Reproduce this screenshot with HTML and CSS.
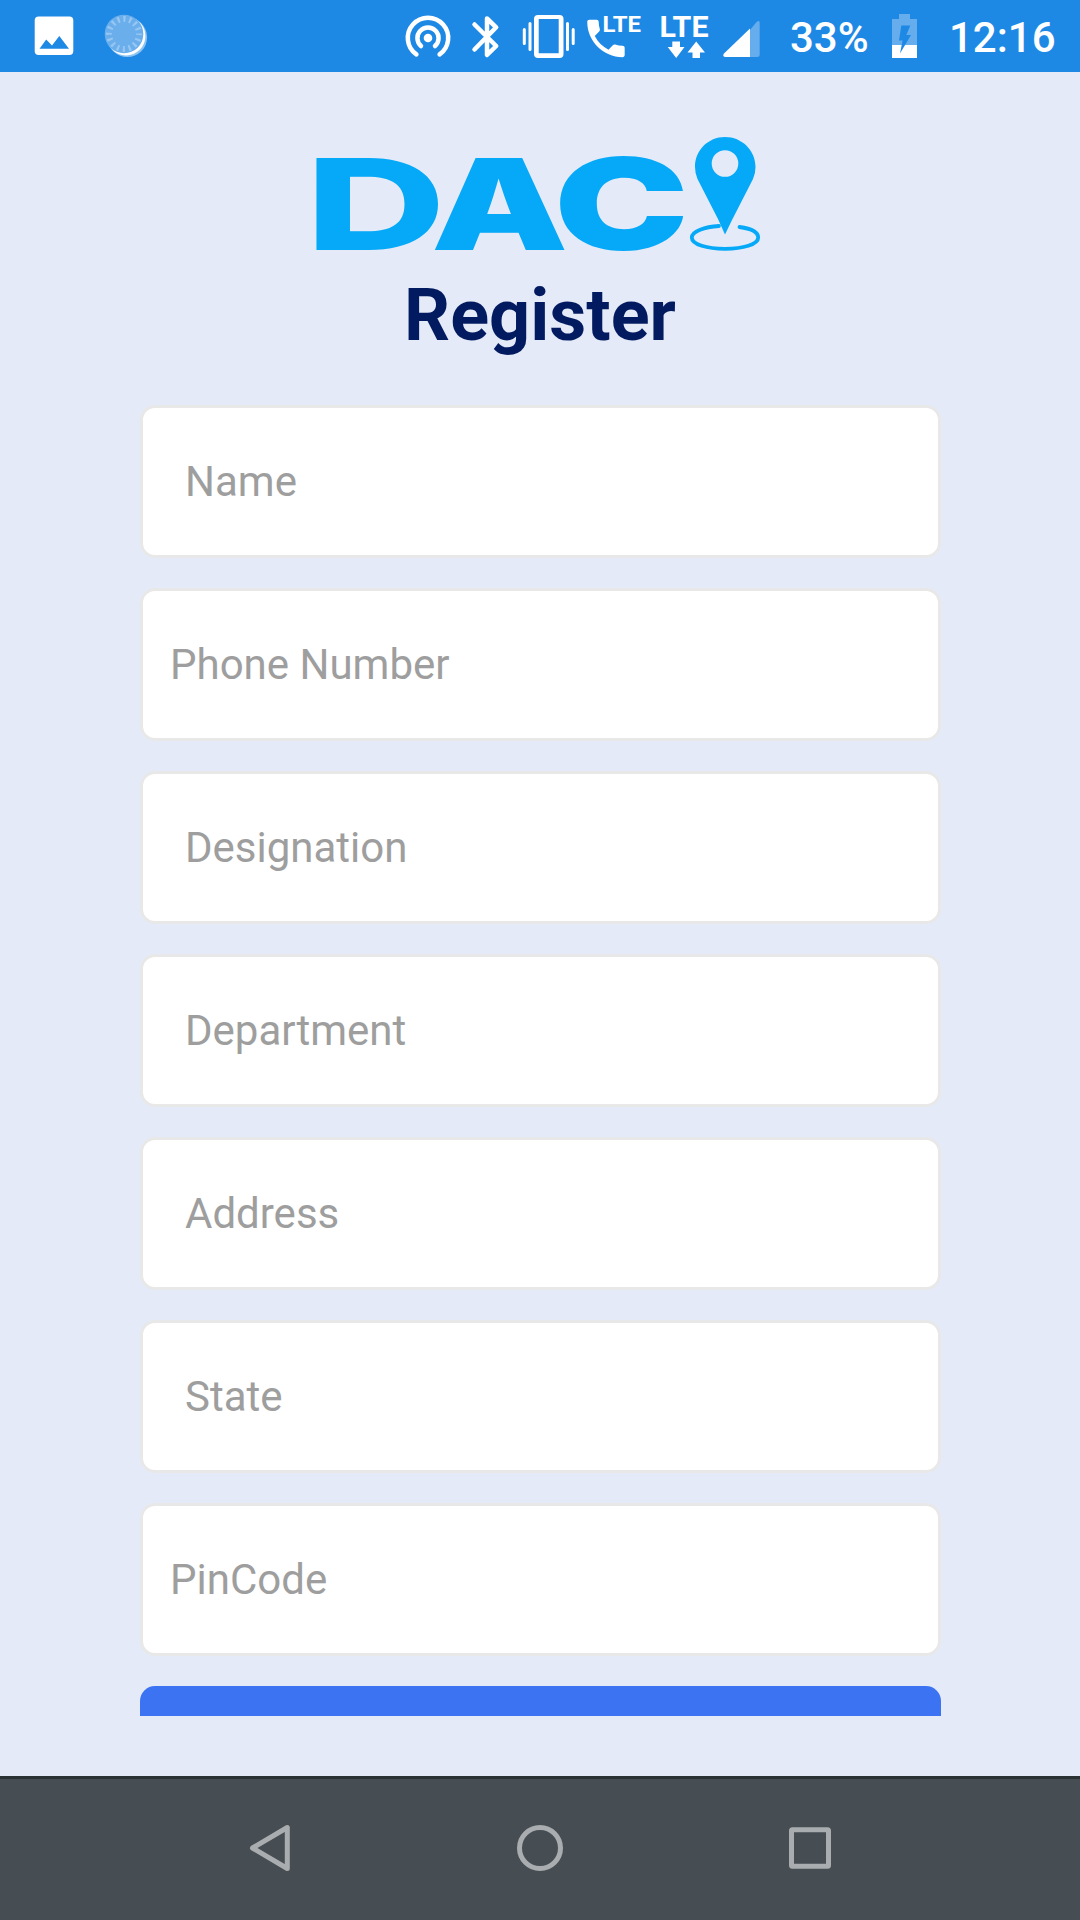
FILE: index.html
```html
<!DOCTYPE html>
<html lang="en">
<head>
<meta charset="utf-8">
<title>Register</title>
<link rel="stylesheet" href="styles.css">
</head>
<body>
<div class="screen">
  <header class="status">
    <svg width="90" height="72" viewBox="0 0 90 72">
      <rect x="34.7" y="16.5" width="38.6" height="38.6" rx="4" fill="#fff"/>
      <path d="M39.5 48.7 46.2 39.6 52 45.4 59.3 36 69 48.7z" fill="#1e89e5"/>
    </svg>
    <svg width="70" height="72" viewBox="90 0 70 72">
      <circle cx="127.3" cy="37.3" r="19.8" fill="#8fc4f2"/>
      <circle cx="126" cy="36" r="19.4" fill="#fff"/>
      <circle cx="124" cy="34" r="19.3" fill="#6aaeec"/>
      <circle cx="124" cy="34" r="15" fill="none" stroke="#96c6f2" stroke-width="6" stroke-dasharray="2.2 3.69" stroke-dashoffset="1.1"/>
    </svg>
    <span class="spacer"></span>
    <svg width="60" height="72" viewBox="400 0 60 72">
      <g fill="none" stroke="#fff" stroke-width="4.5" stroke-linecap="round">
        <path d="M416.400 54.400A20.200 20.200 0 1 1 439.600 54.400"/>
        <path d="M421 46A10.600 10.600 0 1 1 435 46"/>
      </g>
      <circle cx="428" cy="38" r="4.300" fill="#fff"/>
    </svg>
    <svg width="50" height="72" viewBox="460 0 50 72">
      <path d="M474.500 24.500 496.200 46 487 55V18.500L496.200 27.300 474.500 49.500" fill="none" stroke="#fff" stroke-width="4.500" stroke-linecap="round" stroke-linejoin="round"/>
    </svg>
    <svg width="70" height="72" viewBox="510 0 70 72">
      <path fill="#fff" fill-rule="evenodd" d="M538 15H559.500a4 4 0 0 1 4 4V54a4 4 0 0 1-4 4H538a4 4 0 0 1-4-4V19a4 4 0 0 1 4-4zM538.700 19V53.300H558.700V19z"/>
      <path d="M530 23.500V49.500M524.300 29.500V43.500M567.500 23.500V49.500M573.200 29.500V43.500" stroke="#fff" stroke-width="3" stroke-linecap="round"/>
    </svg>
    <svg width="70" height="72" viewBox="580 0 70 72" class="net">
      <path transform="translate(581 13.500) scale(2.080)" fill="#fff" d="M6.620 10.790c1.440 2.830 3.760 5.140 6.590 6.590l2.200-2.200c.27-.27.67-.36 1.020-.24 1.120.37 2.330.57 3.570.57.55 0 1 .45 1 1V20c0 .55-.45 1-1 1-9.390 0-17-7.610-17-17 0-.55.45-1 1-1h3.500c.55 0 1 .45 1 1 0 1.250.2 2.450.57 3.570.11.35.03.74-.25 1.020z"/>
      <text x="602.500" y="32" font-size="22.500" textLength="38.500" lengthAdjust="spacingAndGlyphs">LTE</text>
    </svg>
    <svg width="65" height="72" viewBox="650 0 65 72" class="net">
      <text x="659.500" y="37" font-size="29" textLength="49" lengthAdjust="spacingAndGlyphs">LTE</text>
      <path fill="#fff" d="M672.300 41.500H680V47h4.500L676.200 58 667.700 47h4.600zM692.500 58V52.500H687.500L696.200 41.500 705 52.500H700V58z"/>
    </svg>
    <svg width="55" height="72" viewBox="715 0 55 72">
      <path d="M750 30 756.600 22Q759.700 19.500 759.700 23V54.500Q759.700 57 757 57H750z" fill="#65adec"/>
      <path d="M750 28.500V57H725Q722 56 724 53.500z" fill="#fff"/>
    </svg>
    <span class="battery-level">33%</span>
    <svg width="26" height="72" viewBox="892 0 26 72" class="battery">
      <path d="M899 14h11v5h7v26h-25V19h7z" fill="#65adec"/>
      <path d="M892 45h25v13h-25z" fill="#fff"/>
      <path d="M901.300 25.500H910.300L906.300 35H911L900 53.500 902.600 40.500H899z" fill="#1e89e5"/>
    </svg>
    <span class="clock">12:16</span>
  </header>

  <main class="content">
    <svg class="logo" width="480" height="120" viewBox="300 135 480 120">
      <g class="wordmark">
        <text class="letter-d" transform="translate(305.500 249.500) scale(1.530 1)">D</text>
        <text transform="translate(431 249.500) scale(1.360 1)">A</text>
        <text transform="translate(554 249.500) scale(1.420 1)">C</text>
      </g>
      <path fill="#05a9f7" fill-rule="evenodd" d="M725 137C708 137 695 150.500 695 167Q695 173.500 697.500 179L718 219 725 234.500 732 220 753 179Q755.500 173.500 755.500 167C755.500 150.500 742 137 725 137zM725 150.200a13.300 13.300 0 1 1 0 26.600a13.300 13.300 0 1 1 0-26.600z"/>
      <path d="M719 226C705 227 691.800 231 691.800 237.500C691.800 244.500 707 248.800 725 248.800S758.200 244.500 758.200 237.500C758.200 232 750 228.500 739.500 227" fill="none" stroke="#05a9f7" stroke-width="3.800" stroke-linecap="round"/>
    </svg>
    <h1 class="title">Register</h1>
    <form class="form">
      <input class="field" placeholder="Name">
      <input class="field numeric" placeholder="Phone Number">
      <input class="field" placeholder="Designation">
      <input class="field" placeholder="Department">
      <input class="field" placeholder="Address">
      <input class="field" placeholder="State">
      <input class="field numeric" placeholder="PinCode">
      <button class="submit" type="button" aria-label="Submit"></button>
    </form>
  </main>

  <nav class="navbar">
    <svg width="60" height="60" viewBox="240 1818 60 60"><path d="M252.500 1848 287.300 1827.500V1868.500z"/></svg>
    <svg width="60" height="60" viewBox="510 1818 60 60"><circle cx="540" cy="1848" r="20.500"/></svg>
    <svg width="60" height="60" viewBox="780 1818 60 60"><rect x="791.500" y="1829.700" width="37" height="36.600" rx="1"/></svg>
  </nav>
</div>
</body>
</html>
```
FILE: styles.css
```css
* {
  box-sizing: border-box;
}

body {
  margin: 0;
  font-family: Roboto, sans-serif;
}

.screen {
  display: flex;
  flex-direction: column;
  width: 1080px;
  height: 1920px;
  overflow: hidden;
  background: #e4eaf8;
}

.status {
  display: flex;
  align-items: center;
  flex: none;
  height: 72px;
  background: #1e89e5;
  color: #fff;
  font-size: 42px;
  font-weight: 500;
  line-height: 68px;
}

.status svg {
  flex: none;
}

.spacer {
  flex: 1;
}

.battery-level {
  width: 122px;
  padding: 4px 0 0 20px;
}

.clock {
  width: 162px;
  padding: 4px 0 0 31px;
}

.net text {
  fill: #fff;
  font-family: Roboto, sans-serif;
  font-weight: 700;
}

.content {
  display: flex;
  flex-direction: column;
  align-items: center;
  flex: 1;
  padding-top: 63px;
}

.logo {
  flex: none;
  overflow: visible;
}

.wordmark {
  fill: #05a9f7;
  font-family: Inter, sans-serif;
  font-size: 127px;
  font-weight: 900;
}

.letter-d {
  font-weight: 800;
}

.title {
  margin: 19px 0 0;
  height: 131px;
  color: #021a60;
  font-size: 72px;
  font-weight: 700;
  line-height: 84px;
}

.form {
  display: flex;
  flex-direction: column;
  gap: 30px;
  width: 801px;
  height: 1311px;
  overflow: hidden;
}

.field {
  flex: none;
  height: 153px;
  padding: 0 42.5px;
  border: 3px solid #e8e8e8;
  border-radius: 15px;
  background: #fff;
  font-family: inherit;
  font-size: 42px;
}

.numeric {
  padding: 0 27.5px;
}

.field::placeholder {
  color: #9e9e9e;
  opacity: 1;
}

.submit {
  flex: none;
  height: 150px;
  padding: 0;
  border: 0;
  border-radius: 15px;
  background: #3b73f3;
}

.navbar {
  display: flex;
  align-items: center;
  justify-content: center;
  gap: 210px;
  flex: none;
  height: 144px;
  padding-bottom: 3px;
  border-top: 3px solid #2b3234;
  background: #464d53;
}

.navbar svg {
  fill: none;
  stroke: #a9adaf;
  stroke-width: 5;
  stroke-linejoin: round;
}
```
